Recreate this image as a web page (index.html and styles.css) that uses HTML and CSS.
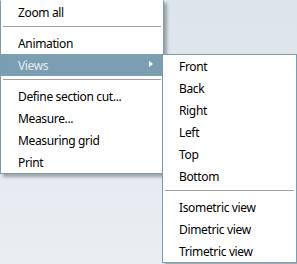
FILE: index.html
```
<!DOCTYPE html>
<html>
<head>
<meta charset="utf-8">
<link rel="stylesheet" href="styles.css">
</head>
<body>
<div class="desk">
  <ul class="menu main">
    <li class="item">Zoom all</li>
    <li class="sep"></li>
    <li class="item">Animation</li>
    <li class="item active">Views<span class="arrow"></span>
      <ul class="menu sub">
        <li class="item">Front</li>
        <li class="item">Back</li>
        <li class="item">Right</li>
        <li class="item">Left</li>
        <li class="item">Top</li>
        <li class="item">Bottom</li>
        <li class="sep"></li>
        <li class="item">Isometric view</li>
        <li class="item">Dimetric view</li>
        <li class="item">Trimetric view</li>
      </ul>
    </li>
    <li class="sep"></li>
    <li class="item">Define section cut...</li>
    <li class="item">Measure...</li>
    <li class="item">Measuring grid</li>
    <li class="item">Print</li>
  </ul>
</div>
</body>
</html>
```
FILE: styles.css
```
html, body {
  margin: 0;
  padding: 0;
}
body {
  width: 297px;
  height: 264px;
  overflow: hidden;
  font-family: "Segoe UI", "Noto Sans", "Open Sans", sans-serif;
  font-size: 12px;
  letter-spacing: -0.35px;
  color: #000;
}
.desk {
  width: 297px;
  height: 264px;
  background: linear-gradient(#dce4ec, #e9eef2);
}
.menu {
  list-style: none;
  margin: 0;
  padding: 0;
  background: #fff;
  border: 1px solid #7d9cae;
  box-shadow: 3px 3px 3px rgba(0, 0, 0, 0.3);
}
.main {
  width: 162px;
  border-top-color: #fff;
}
.item {
  position: relative;
  height: 22px;
  line-height: 23px;
  padding-left: 17px;
  white-space: nowrap;
}
.sub .item {
  padding-left: 16px;
}
.sep {
  height: 1px;
  margin: 3px 2px 5px;
  background: #a0a0a0;
}
.active {
  background: #7b9eb2;
  color: #e4ecf1;
}
.arrow {
  position: absolute;
  left: 148px;
  top: 7px;
  width: 0;
  height: 0;
  border-top: 3.5px solid transparent;
  border-bottom: 3.5px solid transparent;
  border-left: 4px solid #fff;
}
.sub {
  position: absolute;
  top: 0;
  left: 161px;
  width: 133px;
  color: #000;
}
```
